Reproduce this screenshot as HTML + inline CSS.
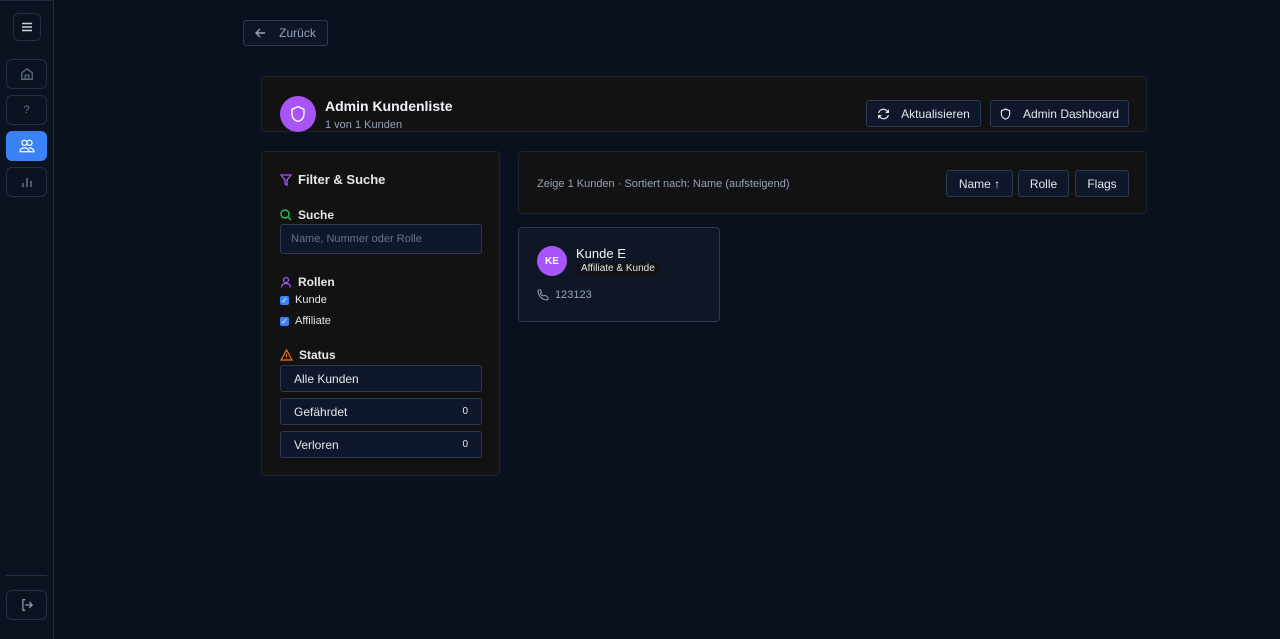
<!DOCTYPE html>
<html><head><meta charset="utf-8"><style>
*{box-sizing:border-box;margin:0;padding:0}
body{width:1280px;height:639px;background:#0a101d;font-family:"Liberation Sans",sans-serif;color:#e5e7eb;position:relative;overflow:hidden;font-size:12px}
.abs{position:absolute}
.sb{left:0;top:0;width:54px;height:639px;background:#0b1220;border-right:1px solid #1e293b;border-top:1px solid #1e293b}
.sbtn{position:absolute;left:6px;width:41px;height:30px;border:1px solid #253044;border-radius:6px;display:flex;align-items:center;justify-content:center;color:#64748b}
.panel{background:#121212;border:1px solid #1c2433;border-radius:4px}
.btn{position:absolute;background:#0f172a;border:1px solid #2b3a52;border-radius:3px;color:#e5e7eb;display:flex;align-items:center;justify-content:center;font-size:12px}
.fld{position:absolute;left:18px;width:202px;background:#0f172a;border:1px solid #2b3a52;border-radius:3px;font-size:12px;display:flex;align-items:center;padding:0 13px;justify-content:space-between}
.lbl{position:absolute;left:18px;font-size:12px;font-weight:bold;display:flex;align-items:center;gap:6px}
.cb{display:inline-block;width:9px;height:9px;background:#3b82f6;border-radius:2px;color:#fff;font-size:8px;line-height:9px;text-align:center}
</style></head><body>
<div class="abs sb">
 <div class="sbtn" style="left:13px;width:28px;height:28px;top:12px;color:#cbd5e1"><svg width="12" height="10" viewBox="0 0 12 10"><path d="M1 1.5h10M1 5h10M1 8.5h10" stroke="#cbd5e1" stroke-width="1.5"/></svg></div>
 <div class="sbtn" style="top:58px"><svg width="14" height="14" viewBox="0 0 24 24" fill="none" stroke="#64748b" stroke-width="2"><path d="M3 10l9-7 9 7v11H3z"/><path d="M9 21v-7h6v7"/></svg></div>
 <div class="sbtn" style="top:94px;font-size:11px">?</div>
 <div class="sbtn" style="top:130px;background:#3b82f6;border-color:#3b82f6"><svg width="16" height="14" viewBox="0 0 24 22" fill="none" stroke="#fff" stroke-width="2"><circle cx="8" cy="6" r="4"/><circle cx="16" cy="6" r="4"/><path d="M1 20c0-4 3-6 7-6s7 2 7 6zM15 14c4 0 8 2 8 6h-7"/></svg></div>
 <div class="sbtn" style="top:166px"><svg width="12" height="12" viewBox="0 0 12 12" stroke="#64748b" stroke-width="1.5"><path d="M2 11V7M6 11V2M10 11V5"/></svg></div>
 <div class="abs" style="left:6px;top:574px;width:41px;border-top:1px solid #253044"></div>
 <div class="sbtn" style="top:589px"><svg width="14" height="14" viewBox="0 0 24 24" fill="none" stroke="#94a3b8" stroke-width="2"><path d="M9 21H5V3h4M16 17l5-5-5-5M21 12H9"/></svg></div>
</div>
<div class="btn" style="left:243px;top:20px;width:85px;height:26px;color:#94a3b8;background:#0d1526"><svg width="11" height="10" viewBox="0 0 11 10" fill="none" stroke="#94a3b8" stroke-width="1.4" style="margin-right:13px"><path d="M10 5H1M5 1L1 5l4 4"/></svg>Zurück</div>

<div class="abs panel" style="left:261px;top:76px;width:886px;height:56px;border-radius:4px">
 <div class="abs" style="left:18px;top:19px;width:36px;height:36px;border-radius:50%;background:#a855f7;display:flex;align-items:center;justify-content:center"><svg width="16" height="18" viewBox="0 0 24 26" fill="none" stroke="#fff" stroke-width="2"><path d="M12 2l9 4v7c0 6-4 10-9 11-5-1-9-5-9-11V6z"/></svg></div>
 <div class="abs" style="left:63px;top:21px;font-size:14px;font-weight:bold;color:#f1f5f9">Admin Kundenliste</div>
 <div class="abs" style="left:63px;top:42px;font-size:11px;color:#94a3b8">1 von 1 Kunden</div>
 <div class="btn" style="left:604px;top:23px;width:115px;height:27px"><svg width="13" height="12" viewBox="0 0 24 22" fill="none" stroke="#e5e7eb" stroke-width="2.2" style="margin-right:11px"><path d="M3 9a9 9 0 0116-3l2 2M21 13a9 9 0 01-16 3l-2-2M21 3v5h-5M3 19v-5h5"/></svg>Aktualisieren</div>
 <div class="btn" style="left:728px;top:23px;width:139px;height:27px"><svg width="11" height="12" viewBox="0 0 24 26" fill="none" stroke="#e5e7eb" stroke-width="2.5" style="margin-right:12px"><path d="M12 2l9 4v7c0 6-4 10-9 11-5-1-9-5-9-11V6z"/></svg>Admin Dashboard</div>
</div>

<div class="abs panel" style="left:261px;top:151px;width:239px;height:325px">
 <div class="lbl" style="top:20px;font-size:13px"><svg width="12" height="12" viewBox="0 0 12 12" fill="none" stroke="#a855f7" stroke-width="1.3"><path d="M1 1h10L7 6v5L5 10V6z"/></svg>Filter &amp; Suche</div>
 <div class="lbl" style="top:56px"><svg width="12" height="12" viewBox="0 0 12 12" fill="none" stroke="#22c55e" stroke-width="1.4"><circle cx="5" cy="5" r="4"/><path d="M8 8l3 3"/></svg>Suche</div>
 <div class="fld" style="top:72px;height:30px;color:#64748b;font-size:11px;padding:0 10px">Name, Nummer oder Rolle</div>
 <div class="lbl" style="top:123px"><svg width="12" height="12" viewBox="0 0 12 12" fill="none" stroke="#a855f7" stroke-width="1.2"><circle cx="6" cy="4" r="2.5"/><path d="M1.5 11.5c0-3 2-4 4.5-4s4.5 1 4.5 4"/></svg>Rollen</div>
 <div class="abs" style="left:18px;top:142px;font-size:11px;display:flex;gap:6px;align-items:center"><span class="cb">✓</span>Kunde</div>
 <div class="abs" style="left:18px;top:163px;font-size:11px;display:flex;gap:6px;align-items:center"><span class="cb">✓</span>Affiliate</div>
 <div class="lbl" style="top:196px"><svg width="13" height="12" viewBox="0 0 13 12" fill="none" stroke="#f97316" stroke-width="1.2"><path d="M6.5 1L12 11H1z M6.5 5v3M6.5 9.5v.5"/></svg>Status</div>
 <div class="fld" style="top:213px;height:27px">Alle Kunden</div>
 <div class="fld" style="top:246px;height:27px">Gefährdet<span style="font-size:10px">0</span></div>
 <div class="fld" style="top:279px;height:27px">Verloren<span style="font-size:10px">0</span></div>
</div>

<div class="abs panel" style="left:518px;top:151px;width:629px;height:63px">
 <div class="abs" style="left:18px;top:26px;font-size:11px;color:#94a3b8">Zeige 1 Kunden · Sortiert nach: Name (aufsteigend)</div>
 <div class="btn" style="left:427px;top:18px;width:67px;height:27px">Name ↑</div>
 <div class="btn" style="left:499px;top:18px;width:51px;height:27px">Rolle</div>
 <div class="btn" style="left:556px;top:18px;width:54px;height:27px">Flags</div>
</div>

<div class="abs" style="left:518px;top:227px;width:202px;height:95px;background:#0f1727;border:1px solid #2b3a52;border-radius:4px">
 <div class="abs" style="left:18px;top:18px;width:30px;height:30px;border-radius:50%;background:#a855f7;color:#fff;font-size:10px;font-weight:bold;display:flex;align-items:center;justify-content:center">KE</div>
 <div class="abs" style="left:57px;top:18px;font-size:13px;color:#f1f5f9">Kunde E</div>
 <div class="abs" style="left:58px;top:35px;font-size:10px;background:#131313;padding:0 4px;line-height:12px">Affiliate &amp; Kunde</div>
 <div class="abs" style="left:18px;top:61px;font-size:11px;color:#94a3b8;display:flex;gap:6px;align-items:center"><svg width="12" height="12" viewBox="0 0 24 24" fill="none" stroke="#94a3b8" stroke-width="2"><path d="M22 17v3a2 2 0 01-2 2A19 19 0 012 4a2 2 0 012-2h3l2 5-2.5 1.5a11 11 0 005 5L17 13z"/></svg>123123</div>
</div>
</body></html>
